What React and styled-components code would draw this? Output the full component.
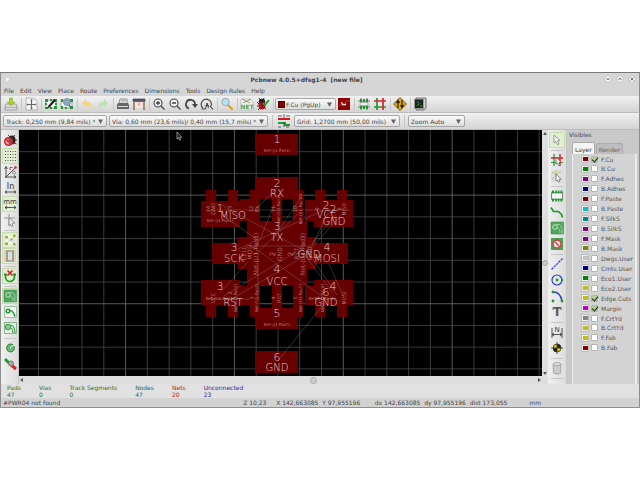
import React, { useState } from 'react';
import styled, { createGlobalStyle } from 'styled-components';

const GlobalStyle = createGlobalStyle`
    * {
        box-sizing: border-box;
    }
    body {
        margin: 0;
        background: white;
        color: #444;
        font-family: 'DejaVu Sans', sans-serif;
        font-size: 6px;
        line-height: 7px;
    }
    button, select, input {
        font: inherit;
        color: inherit;
        margin: 0;
    }
`;

const Page = styled.div`
    display: flex;
    flex-direction: column;
    justify-content: center;
    min-height: 100vh;
`;

const Window = styled.main`
    background: #d6d6d6;
    border: 1px solid #8e8e8e;
    border-top-color: #777;
`;

const TitleBar = styled.header`
    display: flex;
    align-items: center;
    padding: 2px 3px;
    gap: 4px;
`;

const TitleDot = styled.span`
    width: 3px;
    height: 3px;
    margin-left: 2px;
    border-radius: 50%;
    background: #fafafa;
`;

const Title = styled.h1`
    flex: 1;
    margin: 0;
    font-size: 6px;
    line-height: 7px;
    text-align: center;
    white-space: pre;
`;

const WindowBtn = styled.button`
    display: flex;
    width: 8px;
    height: 8px;
    padding: 0;
    border: 1px solid #c4c4c4;
    border-radius: 50%;
    background: #f2f2f2;
`;

const MenuBar = styled.nav`
    display: flex;
    gap: 6px;
    padding: 2px 3px;
`;

const MenuLink = styled.a`
    color: inherit;
    text-decoration: none;
`;

const Toolbar = styled.div`
    display: flex;
    align-items: center;
    gap: ${p => p.$gap || 0}px;
    padding: 0 2px;
    background: linear-gradient(#f1f1f1, #d4d4d4);
    border-bottom: 1px solid #bdbdbd;
`;

const SideBar = styled.div`
    display: flex;
    flex-direction: column;
    align-items: center;
    width: ${p => p.$width}px;
    padding-top: 2px;
    background: linear-gradient(90deg, #f0f0f0, #dcdcdc);
    border-right: 1px solid #c4c4c4;
`;

const ToolBtn = styled.button`
    display: flex;
    flex: none;
    padding: 0;
    border: 0;
    background: ${p => (p.$on ? '#e2eed2' : 'transparent')};
    box-shadow: ${p => (p.$on ? 'inset 0 0 0 1px #c9dcb0' : 'none')};
`;

const Separator = styled.span`
    flex: none;
    width: ${p => (p.$flat ? 12 : 4)}px;
    height: ${p => (p.$flat ? 4 : 12)}px;
    background: linear-gradient(#c6c6c6, #c6c6c6) center / ${p => (p.$flat ? '100% 1px' : '1px 100%')} no-repeat;
`;

const ComboBox = styled.span`
    display: flex;
    align-items: center;
    gap: 1px;
    width: ${p => p.$width}px;
    height: 12px;
    padding: 0 3px 0 2px;
    border: 1px solid #a6a6a6;
    border-radius: 2px;
    background: linear-gradient(#fafafa, #dedede);
`;

const ComboSelect = styled.select`
    flex: 1;
    min-width: 0;
    padding: 0;
    border: 0;
    appearance: none;
    background: transparent;
`;

const Chip = styled.span`
    width: 7px;
    height: 7px;
    border: 1px solid #400;
    background: #840000;
`;

const Work = styled.div`
    display: flex;
`;

const Editor = styled.section`
    flex: 1;
    min-width: 0;
`;

const Board = styled.svg`
    display: block;
    width: 100%;
    background: black;
    font-weight: 200;
`;

const ScrollTrack = styled.div`
    display: flex;
    align-items: center;
    background: #dedede;
    ${p =>
        p.$vertical
            ? `
        flex-direction: column;
        width: 6px;
        padding: 2px 1px 9px;
    `
            : `
        height: 8px;
        padding: 0 1px;
    `}
`;

const ScrollGap = styled.span`
    flex: ${p => p.$grow};
`;

const ScrollThumb = styled.span`
    width: ${p => p.$size}px;
    height: ${p => p.$size}px;
    border: 1px solid #aaa;
    border-radius: 50%;
    background: #ccc;
`;

const Panel = styled.aside`
    display: flex;
    flex-direction: column;
    width: 72px;
    padding: 0 2px 0 1px;
    background: #c9c9c9;
`;

const PanelTitle = styled.h2`
    margin: 0;
    padding: 1px;
    font-size: 6px;
    font-weight: normal;
    line-height: 7px;
`;

const Tabs = styled.div`
    display: flex;
    align-items: flex-end;
    gap: 1px;
    padding: 3px 4px 0;
`;

const Tab = styled.button`
    height: ${p => (p.$active ? 12 : 11)}px;
    padding: 1px 2px 0;
    border: 1px solid #aaa;
    border-bottom: 0;
    border-radius: 2px 2px 0 0;
    color: ${p => (p.$active ? '#333' : '#666')};
    background: ${p => (p.$active ? '#f4f4f4' : '#bebebe')};
`;

const LayerList = styled.div`
    display: flex;
    flex: 1;
    flex-direction: column;
    justify-content: space-between;
    margin-left: 4px;
    padding: 1px 0 32px 8px;
    border: 1px solid #eee;
    border-width: 0 2px 0 1px;
    background: #d3d3d3;
`;

const LayerRow = styled.div`
    display: flex;
    align-items: center;
    gap: 2px;
`;

const Swatch = styled.button`
    width: 8px;
    height: 8px;
    padding: 0;
    border: 1px solid #bcbcbc;
    border-radius: 1px;
    background: #eee;

    &::after {
        content: '';
        display: block;
        width: 5px;
        height: 4px;
        margin: 1px auto;
        background: ${p => p.$color};
    }
`;

const LayerLabel = styled.label`
    display: flex;
    align-items: center;
    gap: 3px;
    color: #555;
`;

const Tick = styled.input`
    appearance: none;
    width: 7px;
    height: 7px;
    border: 1px solid #b4b4b4;
    border-radius: 1px;
    background: white;

    &:checked {
        background: #b6cf98;
    }
    &:checked::after {
        content: '';
        display: block;
        width: 3px;
        height: 5px;
        margin: -1px 0 0 1px;
        border: solid #222;
        border-width: 0 1px 1px 0;
        transform: rotate(40deg);
    }
`;

const MessagePanel = styled.section`
    display: flex;
    gap: 18px;
    padding: 0 6px;
    line-height: 7px;
    background: #e1e1e1;
    box-shadow: 0 -1px #aaa;
`;

const Message = styled.div`
    color: ${p => p.$color};
`;

const StatusBar = styled.footer`
    display: grid;
    grid-template-columns: 241fr 33fr 99fr 155fr 108fr;
    padding: 1px 2px;
    white-space: pre;
    background: #d2d2d2;
`;

const G = '#1f9a2e';
const K = '#444';

// toolbar drawings, each on a 16 x 16 grid
const icons = {
    save: (
        <>
            <path d="M3 8h10l1 3v3H2v-3z" fill="#ddd" stroke="#888" strokeWidth=".7" />
            <path d="M2 11.500h12" stroke="#999" strokeWidth=".7" />
            <path d="M6.500 2h3v4H12l-4 4-4-4h2.500z" fill="#a9cb33" stroke="#8aac28" strokeWidth=".5" />
        </>
    ),
    sheet: (
        <>
            <path d="M3 2h7l4 3v9H3z" fill="#f7f7f7" stroke="#999" strokeWidth=".7" />
            <path d="M8.500 3v10M4 8.500h9" stroke="#666" strokeWidth="1.200" />
            <path d="M7 4.500l1.500-1.500L10 4.500M7 12l1.500 1.500L10 12M5 7L3.500 8.500 5 10M11.500 7L13 8.500 11.500 10" fill="none" stroke="#999" strokeWidth=".7" />
        </>
    ),
    modedit: (
        <>
            <path d="M3 4h10v8H3z" fill="#f7f7f7" stroke="#888" strokeWidth=".7" />
            <path d="M2 3h3v3H2zM7 3h2v2H7zM11 3h3v3h-3zM2 11h3v2H2zM7 11h2v2H7zM11 10h3v3h-3zM2 7h2v2H2zM12 7h2v2h-2z" fill={G} />
            <path d="M4 12.500l1.500-3L11 3l2 1.500-6 6.500z" fill="#222" />
        </>
    ),
    modview: (
        <>
            <path d="M2 4h11v8H2z" fill="#f7f7f7" stroke="#888" strokeWidth=".7" />
            <path d="M2 3h2v3H2zM11 3h3v3h-3zM2 10h2v3H2zM6 11h2v2H6zM11 10h3v3h-3z" fill={G} />
            <circle cx="8" cy="6" r="3.500" fill="#87a9c4" stroke="#7d99ac" />
            <path d="M10 9l3 4" stroke="#567" strokeWidth="1.500" />
        </>
    ),
    undo: <path d="M3 7l4-4v2.500c5 0 6 4 5 8-1-3-2-4-5-4V11z" fill="#f3d77c" />,
    redo: <path d="M13 7L9 3v2.500c-5 0-6 4-5 8 1-3 2-4 5-4V11z" fill="#bfe0b1" />,
    print: (
        <>
            <path d="M5 3h7v5H4z" fill="#eee" stroke="#666" strokeWidth=".7" />
            <path d="M3 7h10l1 2v4H2V9z" fill="#666" />
            <path d="M3 10h10v1H3z" fill="#ddd" />
            <path d="M6 4.500h5M5.500 6h5" stroke="#888" strokeWidth=".6" />
        </>
    ),
    plot: (
        <>
            <path d="M4 5h8v7H4z" fill="#f8e6e0" />
            <path d="M2 3h12v2.500H2z" fill="#556" stroke="#335" strokeWidth=".6" />
            <path d="M3 5v9M13 5v9" stroke="#8d7448" strokeWidth="1.500" />
            <path d="M8 6v4M6 8h4" stroke="#d89" strokeWidth=".7" />
        </>
    ),
    zoomIn: (
        <>
            <circle cx="7" cy="7" r="4" fill="#eee" stroke={K} strokeWidth="1.100" />
            <path d="M5 7h4M7 5v4M10 10l3.500 3.500" stroke={K} strokeWidth="1.300" />
        </>
    ),
    zoomOut: (
        <>
            <circle cx="7" cy="7" r="4" fill="#eee" stroke={K} strokeWidth="1.100" />
            <path d="M5 7h4M10 10l3.500 3.500" stroke={K} strokeWidth="1.300" />
        </>
    ),
    redraw: (
        <>
            <path d="M6 12.500A4.500 4.500 0 1 1 12 8" fill="none" stroke={K} strokeWidth="1.800" />
            <path d="M9 8h6l-3 4z" fill={K} />
        </>
    ),
    zoomFit: (
        <>
            <path d="M4 12A5 5 0 1 1 12 10M11 10l3 3.500" fill="none" stroke={K} strokeWidth="1.100" />
            <path d="M2.500 13h4l1.500-6 1.500 5M6.500 9.500H10" fill="none" stroke={K} strokeWidth="1" />
        </>
    ),
    find: (
        <>
            <path d="M9 9l4.500 4.500" stroke="#dba51c" strokeWidth="2.300" />
            <circle cx="6.500" cy="6" r="3.700" fill="#b5e2ef" stroke="#9ab" />
        </>
    ),
    netlist: (
        <>
            <path d="M2 3h9l3 3v8H2z" fill="#f2f2f2" stroke="#aaa" strokeWidth=".6" />
            <path d="M3 3l8 4" stroke="#c44" strokeWidth=".7" />
            <path d="M4 7l8-4" stroke={G} strokeWidth=".7" />
            <text x="8" y="13" fontSize="6" fontWeight="700" textAnchor="middle" fill="#4aa355">NET</text>
        </>
    ),
    drc: (
        <>
            <ellipse cx="7" cy="9" rx="3.500" ry="4.500" fill="#c5121b" />
            <path d="M4 6a3 3 0 0 1 6 0zM7 6v7M2 6l2 2M2 10h2M3 14l2-2M11 13l-2-2M4 2l2 3M9 2L8 5" fill="#222" stroke="#222" strokeWidth=".9" />
            <path d="M8 7l2 2 4-5" fill="none" stroke={G} strokeWidth="1.800" />
        </>
    ),
    layerPair: (
        <>
            <path d="M2 2h12v12H2z" fill="#8c0000" />
            <path d="M3 9h3l4-4h4" fill="none" stroke="#b44" strokeWidth=".8" />
            <path d="M6 6a2 2 0 1 0 4 1.500" fill="none" stroke="#eee" strokeWidth="1.200" />
        </>
    ),
    modeModule: (
        <>
            <path d="M2 5h12M2 11h12M5 2v12M11 2v12" stroke="#777" strokeWidth="1" />
            <path d="M4 3h2v3H4zM7 3h2v3H7zM10 3h2v3h-2zM4 10h2v3H4zM7 10h2v3H7zM10 10h2v3h-2z" fill={G} />
            <path d="M4 6.500h8v3H4z" fill="#eee" stroke="#777" strokeWidth=".5" />
        </>
    ),
    modeTrack: (
        <>
            <path d="M2 11h12M5 2v12" stroke={G} strokeWidth="1.700" />
            <path d="M2 5h12M11 2v12" stroke="#dc2430" strokeWidth="1.700" />
            <path d="M6.500 6.500h3v3h-3z" fill="#eee" />
        </>
    ),
    router: (
        <>
            <path d="M8 1.500L14.500 8 8 14.500 1.500 8z" fill="#e5a50c" stroke="#5a4500" strokeWidth=".8" />
            <path d="M6 12V5M4.500 7L6 4.500 7.500 7M10 4v7M8.500 9l1.500 2.500L11.500 9" fill="none" stroke="#222" strokeWidth="1.200" />
        </>
    ),
    console: (
        <>
            <path d="M4 2h10v10l-2 2H4z" fill="#ccc" stroke="#555" strokeWidth=".8" />
            <path d="M2.500 3h9v9.500h-9z" fill="#222" stroke="#999" />
            <path d="M5 5.500l2.500 2L5 10M8 10h2.500" fill="none" stroke="#2da04d" strokeWidth="1" />
        </>
    ),
    autoWidth: (
        <>
            <path d="M2 6h12" stroke="#d3161f" strokeWidth="2" />
            <path d="M2 10h7v2h5" fill="none" stroke={G} strokeWidth="2" />
            <path d="M2 3h4M10 3h4M8 1v4M2 14h3M10 14h3M8 9v5" stroke={K} strokeWidth=".8" />
        </>
    ),
    drcOff: (
        <>
            <ellipse cx="10" cy="8" rx="3.500" ry="4.500" fill="#2b2224" />
            <path d="M6 3l3 3M13 3l-2 2M15 8h-2M14.500 12l-2-1" stroke="#222" strokeWidth=".8" />
            <circle cx="6.500" cy="9.500" r="3.800" fill="#a77" fillOpacity=".6" stroke="#d9222a" strokeWidth="1.500" />
            <path d="M4 7l5 5" stroke="#d9222a" strokeWidth="1.500" />
        </>
    ),
    grid: <path d="M3 3.500h11M3 6.500h11M3 9.500h11M3 12.500h11" stroke="#555" strokeWidth="1" strokeDasharray="1 1.500" />,
    polar: (
        <>
            <path d="M4 14V3M2.500 5L4 2.500 5.500 5M3 13h11M12 11.500l2 1.500-2 1.500M4 13l9-9" fill="none" stroke={K} strokeWidth=".9" />
            <path d="M8 6V3.500h2.500" fill="none" stroke="#555" strokeWidth=".9" />
            <circle cx="12" cy="8.500" r="1.500" fill="none" stroke="#777" strokeWidth=".8" />
            <circle cx="13.500" cy="3.500" r="1.300" fill="#d22" />
        </>
    ),
    inches: (
        <>
            <text x="8.500" y="8.500" fontSize="8" textAnchor="middle" fill="#333">In</text>
            <path d="M3 12h11M5 10.500L3 12l2 1.500M12 10.500l2 1.500-2 1.500" fill="none" stroke={K} strokeWidth=".9" />
        </>
    ),
    mm: (
        <>
            <text x="8" y="7.500" fontSize="7" textAnchor="middle" fill="#333">mm</text>
            <path d="M3 11.500h11M5 10l-2 1.500L5 13M12 10l2 1.500-2 1.500" fill="none" stroke={K} strokeWidth=".9" />
        </>
    ),
    cursorShape: (
        <>
            <path d="M7 2v11M2 6h11" stroke="#999" strokeWidth="1" />
            <path d="M7 6l6 5-3 .3 1 2.700-1.500.5-1-2.500L7 14z" fill="#eee" stroke="#777" strokeWidth=".7" />
        </>
    ),
    ratsnest: (
        <>
            <path d="M4 3h9v10H4z" fill="#f2f2f2" />
            <path d="M4 5l9 7M12 4l-8 8M12 4v8" stroke="#ccc" strokeWidth=".8" />
            <path d="M3 4h3v2.500H3zM11 2.500h2.500V5H11zM8.500 6.500h2v2h-2zM3 10.500h3V13H3zM11 11h2.500v2.500H11z" fill="#9cb81b" />
        </>
    ),
    modRats: (
        <>
            <path d="M2 3h3M11 3h3M2 5.500h3M2 8h3M2 10.500h3M2 13h3M11 5.500h3M11 8h3M11 10.500h3M11 13h3" stroke="#d4a07c" strokeWidth=".9" />
            <path d="M5 3h6v10H5z" fill="#ddd" stroke="#777" strokeWidth="1.200" />
        </>
    ),
    autoDelete: (
        <>
            <path d="M3.500 6v3a4.500 4.500 0 0 0 9 0V6" fill="none" stroke={G} strokeWidth="1.700" />
            <path d="M2 6.500h3M11 6.500h3" stroke={G} strokeWidth="2" />
            <path d="M5.500 2.500l5 5M10.500 2.500l-5 5" stroke="#d91e26" strokeWidth="1.700" />
        </>
    ),
    zoneFill: (
        <>
            <path d="M2 2h12.500v12H2z" fill="#4fa55c" stroke="#3a9248" strokeWidth=".6" />
            <circle cx="6" cy="7" r="2.300" fill="#4fa55c" stroke="#c7e4cb" strokeWidth="1" />
            <path d="M6 4.500h3c4 0 4 4 4 9M8 8c2 0 3 2 3 5" fill="none" stroke="#9fd0a6" strokeWidth="1" />
        </>
    ),
    zoneNone: (
        <>
            <path d="M2.500 2.500h12v11h-12z" fill="#f3f3f3" stroke="#86b58e" strokeWidth=".8" />
            <circle cx="6" cy="7" r="1.800" fill="none" stroke={G} strokeWidth="1.400" />
            <path d="M8 6.500c3 0 4 3 5 6" fill="none" stroke={G} strokeWidth="1.600" />
        </>
    ),
    zoneOutline: (
        <>
            <path d="M2.500 2.500h12v11h-12z" fill="#e6efe6" stroke="#69a874" strokeWidth=".8" />
            <circle cx="6" cy="7" r="2.800" fill="#8fc598" stroke="#3e9d4d" strokeWidth="1" />
            <path d="M8 5c4 0 5 4 5 8M8 8c2 0 3 2 3 5" fill="none" stroke="#3e9d4d" strokeWidth="1.200" />
        </>
    ),
    viaSketch: (
        <>
            <circle cx="8.500" cy="8" r="3.800" fill="#78bb82" stroke="#2d9440" strokeWidth="1.200" />
            <circle cx="8.500" cy="8" r="1.400" fill="#eee" stroke="#2d9440" strokeWidth=".8" />
            <path d="M9 7l3-2" stroke="#eee" strokeWidth="1" />
        </>
    ),
    contrast: (
        <>
            <path d="M3 3l5 5" stroke={G} strokeWidth="3" />
            <path d="M8 8l6 5" stroke="#d7202a" strokeWidth="3" />
            <circle cx="9" cy="7.500" r="2.500" fill="#aaa" stroke="#777" />
        </>
    ),
    select: <path d="M5 3l6 5.500-2.500.3L10 12l-1.600.7L7 9.500 5 11z" fill="#f5f5f5" stroke="#888" strokeWidth=".8" />,
    highlight: (
        <>
            <path d="M2 10.500h12M5 2v12" stroke={G} strokeWidth="1.200" />
            <path d="M2 6h12M11 2v12" stroke="#d91e28" strokeWidth="1.400" />
            <path d="M7 5l5 5-2 .3 1 2.700-1.500.5-1-2.500L7 12z" fill="#f5f5f5" stroke="#555" strokeWidth=".7" />
        </>
    ),
    localRats: (
        <>
            <path d="M2 2h12v12H2z" fill="#dedede" />
            <path d="M7 7L3 4M7 7l5-4M7 7l-4 5M7 7V2M7 7l6 5" stroke="#aaa" strokeWidth=".7" />
            <circle cx="7" cy="5.500" r="1.600" fill="#e3d72c" />
            <path d="M7 6l5 5-2 .3 1 2.300-1.500.5-1-2L7 13z" fill="#f5f5f5" stroke="#666" strokeWidth=".7" />
        </>
    ),
    module: (
        <>
            <path d="M2.500 4.500h11v7h-11z" fill="#f4f4f4" stroke="#666" strokeWidth=".8" />
            <path d="M3 2.500h2v3H3zM6 2.500h1.700v3H6zM8.700 2.500h1.700v3H8.700zM11.400 2.500h2v3h-2zM3 10.500h2v3H3zM6 10.500h1.700v3H6zM8.700 10.500h1.700v3H8.700zM11.400 10.500h2v3h-2z" fill={G} />
        </>
    ),
    track: <path d="M2 3.500l2.500 4h5l3 3 1 3" fill="none" stroke={G} strokeWidth="1.700" />,
    keepout: (
        <>
            <path d="M2 2h12v12H2z" fill="#46a356" />
            <circle cx="8" cy="8" r="4" fill="#f2dede" stroke="#d8363c" strokeWidth="1.300" />
            <path d="M5.500 5.500l5 5" stroke="#d8363c" strokeWidth="1.300" />
        </>
    ),
    line: <path d="M2.500 13.500l11-11" stroke="#2c3fc6" strokeWidth="1.200" strokeDasharray="2.500 .8" />,
    circle: (
        <>
            <circle cx="8" cy="8" r="5" fill="none" stroke="#2c3fc6" strokeWidth="1.200" />
            <circle cx="8" cy="8" r="1.400" fill={G} />
            <circle cx="13" cy="8" r="1.200" fill={G} />
        </>
    ),
    arc: (
        <>
            <path d="M4 4c5 0 8 3 9 9" fill="none" stroke="#2c3fc6" strokeWidth="1.400" />
            <circle cx="4" cy="4" r="1.400" fill={G} />
            <circle cx="4" cy="13" r="1.400" fill={G} />
            <circle cx="13" cy="13" r="1.400" fill={G} />
        </>
    ),
    text: (
        <>
            <text x="8" y="12" fontSize="12" fontWeight="700" textAnchor="middle" fill="#5a5a5a">T</text>
            <path d="M4 3.500v2.500M12 3.500v2.500" stroke="#5a5a5a" strokeWidth=".8" />
        </>
    ),
    dimension: (
        <>
            <text x="8" y="7.500" fontSize="7" textAnchor="middle" fill="#444">N</text>
            <path d="M3 4v10M13 4v10M3 10.500h10M5 9l-2 1.500L5 12M11 9l2 1.500-2 1.500" fill="none" stroke={K} strokeWidth=".9" />
        </>
    ),
    target: (
        <>
            <circle cx="8" cy="8" r="4" fill="#e8c60c" stroke="#333" strokeWidth=".8" />
            <path d="M8 8V4a4 4 0 0 1 4 4zM8 8v4a4 4 0 0 1-4-4z" fill="#222" />
            <path d="M8 2v12M2 8h12" stroke="#333" strokeWidth=".8" />
        </>
    ),
    trash: (
        <>
            <path d="M4 4h8l-.500 9c-1 1.300-6 1.300-7 0z" fill="#bbb" stroke="#999" strokeWidth=".7" />
            <ellipse cx="8" cy="4" rx="4" ry="1.500" fill="#ddd" stroke="#999" strokeWidth=".7" />
            <path d="M6 6v7M8 6.500v7M10 6v7" stroke="#e5e5e5" strokeWidth=".8" />
        </>
    ),
};

const Tool = ({ name, on }) => (
    <ToolBtn type="button" aria-label={name} $on={on}>
        <svg width="16" height="16" viewBox="0 0 16 16">{icons[name]}</svg>
    </ToolBtn>
);

// '|' stands for a separator
const Tools = ({ names, flat, active = [] }) =>
    names.split(' ').map((name, i) =>
        name === '|' ? <Separator key={i} $flat={flat} /> : <Tool key={i} name={name} on={active.includes(name)} />
    );

const Combo = ({ label, value, width, children }) => (
    <ComboBox $width={width}>
        {children}
        <ComboSelect aria-label={label} defaultValue={value}>
            <option>{value}</option>
        </ComboSelect>
        <svg width="5" height="5" viewBox="0 0 5 5">
            <path d="M0 .5h5L2.500 5z" fill="#666" />
        </svg>
    </ComboBox>
);

const Arrow = ({ d }) => (
    <svg width="4" height="4" viewBox="0 0 4 4">
        <path d={d} fill="#555" />
    </svg>
);

const menus = ['File', 'Edit', 'View', 'Place', 'Route', 'Preferences', 'Dimensions', 'Tools', 'Design Rules', 'Help'];

const layers = [
    ['F.Cu', '#840000', true],
    ['B.Cu', '#008400'],
    ['F.Adhes', '#840084'],
    ['B.Adhes', '#000084'],
    ['F.Paste', '#840000'],
    ['B.Paste', '#00c2c2'],
    ['F.SilkS', '#008484'],
    ['B.SilkS', '#840084'],
    ['F.Mask', '#840084'],
    ['B.Mask', '#848400'],
    ['Dwgs.User', '#c2c2c2'],
    ['Cmts.User', '#000084'],
    ['Eco1.User', '#008400'],
    ['Eco2.User', '#c2c200'],
    ['Edge.Cuts', '#c2c200', true],
    ['Margin', '#c200c2', true],
    ['F.CrtYd', '#848484'],
    ['B.CrtYd', '#c2c200'],
    ['F.Fab', '#c2c200'],
    ['B.Fab', '#840000'],
];

const messages = [
    ['Pads', 47, '#2a712a'],
    ['Vias', 0, '#2a712a'],
    ['Track Segments', 0, '#2a712a'],
    ['Nodes', 47, '#226a6a'],
    ['Nets', 20, '#a81f26'],
    ['Unconnected', 23, '#2b2b98'],
];

// pads as left, top, right, bottom
const pads = [
    [255, 134, 298, 155], [255, 177, 298, 199], [255, 308, 298, 329], [255, 351, 298, 373],
    [201, 201, 240, 227], [206, 190, 216, 221], [228, 190, 238, 221], [250, 190, 260, 221],
    [240, 199, 260, 221], [272, 190, 282, 221], [293, 190, 303, 221], [305, 200, 353, 221],
    [314, 201, 353, 227], [315, 190, 325, 221], [337, 190, 347, 221], [247, 221, 307, 286],
    [238, 237, 316, 269], [212, 243, 348, 264], [201, 280, 240, 305], [240, 286, 260, 305],
    [206, 286, 216, 317], [228, 286, 238, 317], [250, 286, 260, 317], [272, 286, 282, 317],
    [293, 286, 303, 317], [305, 286, 353, 305], [314, 280, 353, 305], [315, 286, 325, 317],
    [337, 286, 347, 317],
];

const copper = pads.map(([l, t, r, b]) => `M${l} ${t}H${r}V${b}H${l}z`).join('');

const ratsnest = `
    M277 188L254 211M220 204L308 253M222 215L258 240M324 210L238 249M300 199L272 240
    M336 214L308 249M328 213L312 246M253 247L326 299M207 210H350M207 299H250M220 293L247 263
    M230 300L308 254M312 258L337 295M307 258L333 293M329 264L344 298M324 304L277 362
    M274 205L256 249M298 214L258 252M250 246H310M258 254V300M224 296L296 252M308 252L344 212`;

// text, x, baseline
const bigLabels = [
    ['1', 277, 143], ['2', 277, 187], ['RX', 277, 197], ['3', 277, 230], ['TX', 277, 241],
    ['1', 220, 212], ['MISO', 233, 219], ['2', 326, 209], ['2', 333, 213], ['VCC', 327, 218],
    ['GND', 334, 225], ['3', 234, 251], ['SCK', 234, 262], ['4', 327, 251], ['MOSI', 327, 262],
    ['4', 277, 273], ['VCC', 277, 285], ['3', 220, 290], ['RST', 233, 306], ['4', 333, 290],
    ['6', 326, 296], ['GND', 326, 306], ['5', 277, 317], ['6', 277, 361], ['GND', 277, 371],
    ['GND', 309, 258],
];

const netLabels = [
    ['Net-(J1-Pad1)', 277, 152], ['Net-(J1-Pad1)', 220, 222], ['Net-(J1-Pad5)', 277, 326],
    ['Net-(U1-Pad4)', 220, 300], ['Net-(J4-Pad6)', 322, 300],
];

// text, x, centre y, size
const sideLabels = [
    ['14', 210, 209, 5], ['GND', 215, 209, 5], ['13', 232, 209, 5], ['12', 253, 209, 5], ['RX', 259, 209, 5],
    ['11', 275, 209, 5], ['Net-(U1-Pad1)', 280, 209, 4], ['10', 297, 209, 5], ['Net-(U1-Pad10)', 302, 209, 4],
    ['9', 319, 209, 5], ['8', 341, 209, 5], ['MISO', 346, 209, 5], ['Net-(U1-Pad1)', 258, 254, 6],
    ['Net-(U1-Pad3)', 305, 254, 6], ['2', 275, 254, 7], ['GND', 282, 254, 6], ['2', 293, 254, 7],
    ['RST', 299, 254, 6], ['CELL', 246, 253, 6], ['MOSI', 252, 252, 6], ['GND', 312, 253, 6],
    ['VCC', 215, 298, 5], ['2', 232, 293, 5], ['Net-(U1-Pad2)', 237, 298, 4], ['3', 254, 298, 5],
    ['Net-(U1-Pad3)', 258, 298, 4], ['4', 275, 298, 5], ['RST', 281, 298, 5], ['5', 297, 298, 5],
    ['Net-(U1-Pad5)', 302, 298, 4], ['6', 319, 298, 5], ['Net-(U1-Pad6)', 324, 298, 4], ['MOSI', 346, 298, 5],
];

const columns = Array.from({ length: 24 }, (_, i) => 38.5 + i * 21.77);
const rows = Array.from({ length: 11 }, (_, i) => 151.7 + i * 21.72);

const BoardView = () => (
    <Board viewBox="19 130 523 246" role="img" aria-label="Board">
        {columns.map((x, i) => (
            <path key={i} d={`M${x} 130V376`} stroke={i % 5 === 4 ? '#707070' : '#484848'} strokeWidth=".8" />
        ))}
        {rows.map((y, i) => (
            <path key={i} d={`M19 ${y}H542`} stroke={i % 5 === 2 ? '#707070' : '#484848'} strokeWidth=".8" />
        ))}
        <path d={copper} fill="#6c0000" fillOpacity=".94" />
        <path d={ratsnest} fill="none" stroke="#aaa" strokeOpacity=".45" strokeWidth=".6" />
        <g fill="#e2cccc" textAnchor="middle">
            {bigLabels.map(([text, x, y], i) => (
                <text key={i} x={x} y={y} fontSize={text.length > 1 ? 10 : 11}>{text}</text>
            ))}
            {netLabels.map(([text, x, y], i) => (
                <text key={i} x={x} y={y} fontSize="4">{text}</text>
            ))}
            {sideLabels.map(([text, x, y, size], i) => (
                <text key={i} fontSize={size} transform={`translate(${x} ${y}) rotate(-90)`}>{text}</text>
            ))}
        </g>
        <path d="M177 132v7l1.500-1.500 1.200 2.700 1-.5-1.200-2.500h2.200z" fill="#111" stroke="#ddd" strokeWidth=".6" />
    </Board>
);

const LayersPanel = () => {
    const [visible, setVisible] = useState(layers.map(([, , on]) => !!on));
    const toggle = i => setVisible(visible.map((v, n) => (n === i ? !v : v)));

    return (
        <Panel>
            <PanelTitle>Visibles</PanelTitle>
            <Tabs>
                <Tab type="button" $active>Layer</Tab>
                <Tab type="button">Render</Tab>
            </Tabs>
            <LayerList>
                {layers.map(([name, color], i) => (
                    <LayerRow key={name}>
                        <Swatch type="button" aria-label={`${name} color`} $color={color} />
                        <LayerLabel>
                            <Tick type="checkbox" checked={visible[i]} onChange={() => toggle(i)} />
                            {name}
                        </LayerLabel>
                    </LayerRow>
                ))}
            </LayerList>
        </Panel>
    );
};

const App = () => (
    <Page>
        <GlobalStyle />
        <Window>
            <TitleBar>
                <TitleDot />
                <Title>Pcbnew 4.0.5+dfsg1-4  [new file]</Title>
                {['M1.500 2l1.500 2 1.500-2', 'M1.500 4L3 2l1.500 2', 'M1.500 1.500l3 3M4.500 1.500l-3 3'].map((d, i) => (
                    <WindowBtn key={d} type="button" aria-label={['Minimize', 'Maximize', 'Close'][i]}>
                        <svg width="6" height="6" viewBox="0 0 6 6">
                            <path d={d} fill="none" stroke="#666" strokeWidth=".9" />
                        </svg>
                    </WindowBtn>
                ))}
            </TitleBar>
            <MenuBar>
                {menus.map(menu => (
                    <MenuLink key={menu} href="#">{menu}</MenuLink>
                ))}
            </MenuBar>
            <Toolbar>
                <Tools names="save | sheet | modedit modview | undo redo | print plot | zoomIn zoomOut redraw zoomFit | find | netlist drc |" />
                <Combo label="Layer" value="F.Cu (PgUp)" width={61}>
                    <Chip />
                </Combo>
                <Tools names="layerPair | modeModule modeTrack | router | console" />
            </Toolbar>
            <Toolbar $gap={2}>
                <Combo label="Track width" value="Track: 0,250 mm (9,84 mils) *" width={104} />
                <Combo label="Via size" value="Via: 0,60 mm (23,6 mils)/ 0,40 mm (15,7 mils) *" width={159} />
                <Separator />
                <Tool name="autoWidth" />
                <Combo label="Grid" value="Grid: 1,2700 mm (50,00 mils)" width={106} />
                <Separator />
                <Combo label="Zoom" value="Zoom Auto" width={57} />
            </Toolbar>
            <Work>
                <SideBar $width={18}>
                    <Tools
                        flat
                        active={['grid', 'mm', 'ratsnest', 'modRats', 'autoDelete', 'zoneFill']}
                        names="drcOff grid polar inches mm cursorShape | ratsnest modRats | autoDelete | zoneFill zoneNone zoneOutline | viaSketch contrast"
                    />
                </SideBar>
                <Editor>
                    <BoardView />
                    <ScrollTrack>
                        <Arrow d="M3 0v4L0 2z" />
                        <ScrollGap $grow={286} />
                        <ScrollThumb $size={7} />
                        <ScrollGap $grow={220} />
                        <Arrow d="M1 0v4l3-2z" />
                    </ScrollTrack>
                </Editor>
                <ScrollTrack $vertical>
                    <Arrow d="M0 3h4L2 0z" />
                    <ScrollGap $grow={125} />
                    <ScrollThumb $size={6} />
                    <ScrollGap $grow={105} />
                    <Arrow d="M0 1h4L2 4z" />
                </ScrollTrack>
                <SideBar $width={19}>
                    <Tools
                        flat
                        active={['select']}
                        names="select | highlight localRats | module track zoneFill keepout | line circle arc text | dimension target | trash |"
                    />
                </SideBar>
                <LayersPanel />
            </Work>
            <MessagePanel>
                {messages.map(([name, value, color]) => (
                    <Message key={name} $color={color}>
                        <div>{name}</div>
                        <div>{value}</div>
                    </Message>
                ))}
            </MessagePanel>
            <StatusBar>
                <span>#PWR04 not found</span>
                <span>Z 10,23</span>
                <span>X 142,663085  Y 97,955196</span>
                <span>dx 142,663085  dy 97,955196  dist 173,055</span>
                <span>mm</span>
            </StatusBar>
        </Window>
    </Page>
);

export default App;
